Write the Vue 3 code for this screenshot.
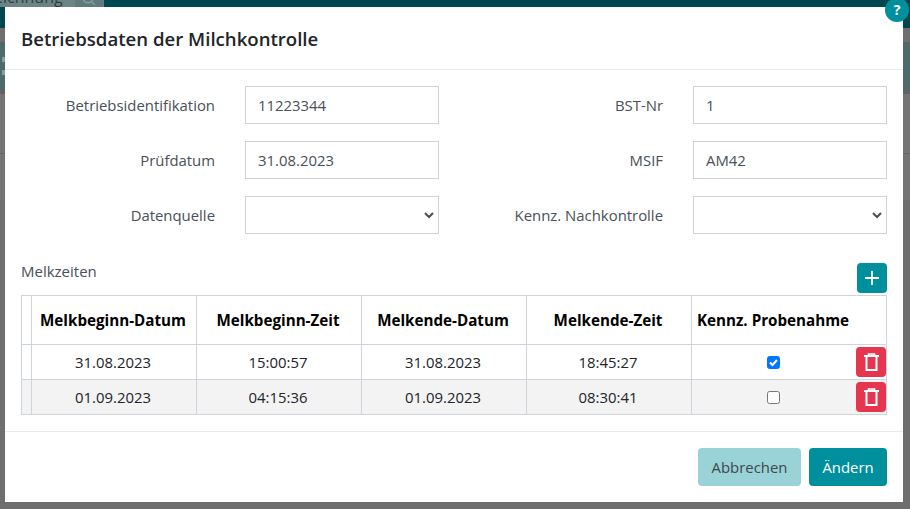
<script setup>
const rows = [
  { a: '31.08.2023', b: '15:00:57', c: '31.08.2023', d: '18:45:27', on: true },
  { a: '01.09.2023', b: '04:15:36', c: '01.09.2023', d: '08:30:41', on: false },
]
const fields = [
  { l: 'Betriebsidentifikation', v: '11223344' },
  { l: 'BST-Nr', v: '1' },
  { l: 'Prüfdatum', v: '31.08.2023' },
  { l: 'MSIF', v: 'AM42' },
  { l: 'Datenquelle', s: true },
  { l: 'Kennz. Nachkontrolle', s: true },
]
</script>

<template>
  <div class="page">
    <div class="bg-top">
      <span class="search-text">eichnung</span>
      <span class="search-btn">
        <svg width="14" height="14" viewBox="0 0 14 14" fill="none" stroke="#8a9c9c" stroke-width="1.4"><circle cx="6" cy="6" r="4.8"/><path d="M9.5 9.5 13 13"/></svg>
      </span>
    </div>
    <i class="dot d1"></i>
    <i class="dot d2"></i>
    <div class="modal">
      <span class="help">?</span>
      <header class="head"><h5>Betriebsdaten der Milchkontrolle</h5></header>
      <div class="body">
        <div class="form">
          <template v-for="f in fields" :key="f.l">
            <label>{{ f.l }}</label>
            <div v-if="f.s" class="ctl select">
              <svg width="10" height="7" viewBox="0 0 10 7" fill="none" stroke="#474e56" stroke-width="2"><path d="M1 1l4 4 4-4"/></svg>
            </div>
            <input v-else class="ctl" :value="f.v" readonly />
          </template>
        </div>
        <div class="sub">
          <span class="sub-title">Melkzeiten</span>
          <button class="icon-btn add">
            <svg width="16" height="16" viewBox="0 0 16 16" fill="none" stroke="#fff" stroke-width="1.8"><path d="M8 1v14M1 8h14"/></svg>
          </button>
        </div>
        <div class="table">
          <div class="tr th">
            <div class="c c0"></div>
            <div class="c c1">Melkbeginn-Datum</div>
            <div class="c c2">Melkbeginn-Zeit</div>
            <div class="c c3">Melkende-Datum</div>
            <div class="c c4">Melkende-Zeit</div>
            <div class="c c5">Kennz. Probenahme</div>
          </div>
          <div v-for="(r, i) in rows" :key="i" class="tr td" :class="{ alt: i === 1 }">
            <div class="c c0"></div>
            <div class="c c1">{{ r.a }}</div>
            <div class="c c2">{{ r.b }}</div>
            <div class="c c3">{{ r.c }}</div>
            <div class="c c4">{{ r.d }}</div>
            <div class="c c5">
              <span class="check" :class="{ on: r.on }">
                <svg v-if="r.on" width="11" height="11" viewBox="0 0 11 11" fill="none" stroke="#fff" stroke-width="2"><path d="M2 5.5l2.5 2.5L9 3"/></svg>
              </span>
              <button class="icon-btn del">
                <svg width="15" height="18" viewBox="0 0 15 18" fill="none" stroke="#fff" stroke-width="2"><path d="M0 3h15"/><path d="M4.5 3V1h6v2" stroke-width="1.6"/><path d="M2.5 3.5V17h10V3.5"/></svg>
              </button>
            </div>
          </div>
        </div>
      </div>
      <footer class="foot">
        <button class="btn cancel">Abbrechen</button>
        <button class="btn ok">Ändern</button>
      </footer>
    </div>
  </div>
</template>

<style scoped>
.page {
  position: relative;
  width: 910px;
  height: 509px;
  overflow: hidden;
  background: linear-gradient(to bottom,
    #00474f 0 28px,
    #6f6f6f 28px 42px,
    #4f6a6c 42px 90px,
    #636363 90px 94px,
    #747474 94px 153px,
    #666 153px 154px,
    #747474 154px 200px,
    #6e6e6e 200px);
  font-family: "Open Sans", "Noto Sans", sans-serif;
  color: #212529;
}
.bg-top {
  height: 7px;
  background: #00474f;
  position: relative;
  overflow: hidden;
}
.search-text {
  position: absolute;
  left: 0;
  top: -14px;
  width: 75px;
  height: 22px;
  font-size: 16px;
  line-height: 22px;
  text-indent: -6px;
  white-space: nowrap;
  overflow: hidden;
  color: #2f3f40;
  background: #6d8486;
}
.search-btn {
  position: absolute;
  left: 75px;
  top: 0;
  width: 28px;
  height: 7px;
  background: #5d7a7c;
  border-right: 1px solid #5f8386;
  overflow: hidden;
}
.search-btn svg {
  position: absolute;
  left: 7px;
  top: -8px;
}
.dot {
  position: absolute;
  left: 2px;
  width: 3px;
  height: 5px;
  background: #8a9c9c;
}
.d1 { top: 57px; }
.d2 { top: 70px; }
.modal {
  position: absolute;
  left: 5px;
  top: 7px;
  width: 898px;
  height: 495px;
  background: #fff;
  display: flex;
  flex-direction: column;
}
.help {
  position: absolute;
  right: -6px;
  top: -9px;
  width: 24px;
  height: 24px;
  border-radius: 50%;
  background: #008f9c;
  color: #fff;
  font-size: 14px;
  font-weight: 700;
  text-align: center;
  line-height: 24px;
}
.head {
  height: 63px;
  border-bottom: 1px solid #e9ecef;
  padding: 0 16px;
  display: flex;
  align-items: center;
  box-sizing: border-box;
  flex: none;
}
h5 {
  margin: 0;
  font-size: 18.6px;
  font-weight: 600;
  color: #212529;
}
.body {
  flex: 1;
  padding: 16px 16px 0;
}
.form {
  display: grid;
  grid-template-columns: 224px 194px 254px 194px;
  grid-auto-rows: 38px;
  row-gap: 17px;
  align-items: center;
  justify-content: start;
}
label {
  font-size: 14.9px;
  text-align: right;
  padding-right: 30px;
  color: #495057;
}
.ctl {
  box-sizing: border-box;
  width: 194px;
  height: 38px;
  border: 1px solid #ced4da;
  padding: 0 12px;
  font: inherit;
  font-size: 14.9px;
  color: #495057;
  background: #fff;
  outline: none;
}
.select {
  display: flex;
  align-items: center;
  justify-content: flex-end;
  padding-right: 4px;
}
.sub {
  display: flex;
  justify-content: space-between;
  height: 30px;
  margin-top: 29px;
  margin-bottom: 2px;
}
.sub-title {
  font-size: 15px;
  color: #495057;
  line-height: 16px;
}
.icon-btn {
  border: 0;
  padding: 0;
  border-radius: 4px;
  display: flex;
  align-items: center;
  justify-content: center;
}
.add {
  width: 30px;
  height: 30px;
  background: #008f9c;
}
.del {
  position: absolute;
  right: 0;
  top: 2px;
  width: 30px;
  height: 30px;
  background: #e5354f;
}
.table {
  width: 866px;
  border: 1px solid #ced4da;
  box-sizing: border-box;
}
.tr {
  display: grid;
  grid-template-columns: 9px 165px 165px 165px 165px 1fr;
}
.th {
  height: 48px;
  font-weight: 700;
  font-size: 15.2px;
  color: #000;
}
.th .c5 { padding-right: 32px; }
.td {
  height: 35px;
  border-top: 1px solid #ced4da;
  box-sizing: border-box;
  font-size: 14.9px;
}
.alt { background: #f3f3f3; }
.c {
  display: flex;
  align-items: center;
  justify-content: center;
  border-left: 1px solid #ced4da;
  position: relative;
}
.c1, .c2, .c3, .c4 { padding-right: 2px; }
.c0 { border-left: 0; }
.check {
  width: 13px;
  height: 13px;
  box-sizing: border-box;
  border: 1px solid #767676;
  border-radius: 2.5px;
  background: #fff;
  display: flex;
  align-items: center;
  justify-content: center;
  margin-right: 32px;
}
.check.on {
  background: #0075ff;
  border-color: #0075ff;
}
.foot {
  height: 71px;
  flex: none;
  border-top: 1px solid #e9ecef;
  box-sizing: border-box;
  display: flex;
  justify-content: flex-end;
  align-items: center;
  gap: 8px;
  padding: 0 16px;
}
.btn {
  height: 38px;
  border: 0;
  border-radius: 4px;
  font: inherit;
  font-size: 14.9px;
  padding: 0;
}
.cancel {
  width: 103px;
  background: #99d2d7;
  color: #40484c;
}
.ok {
  width: 78px;
  background: #008f9c;
  color: #fff;
}
</style>
